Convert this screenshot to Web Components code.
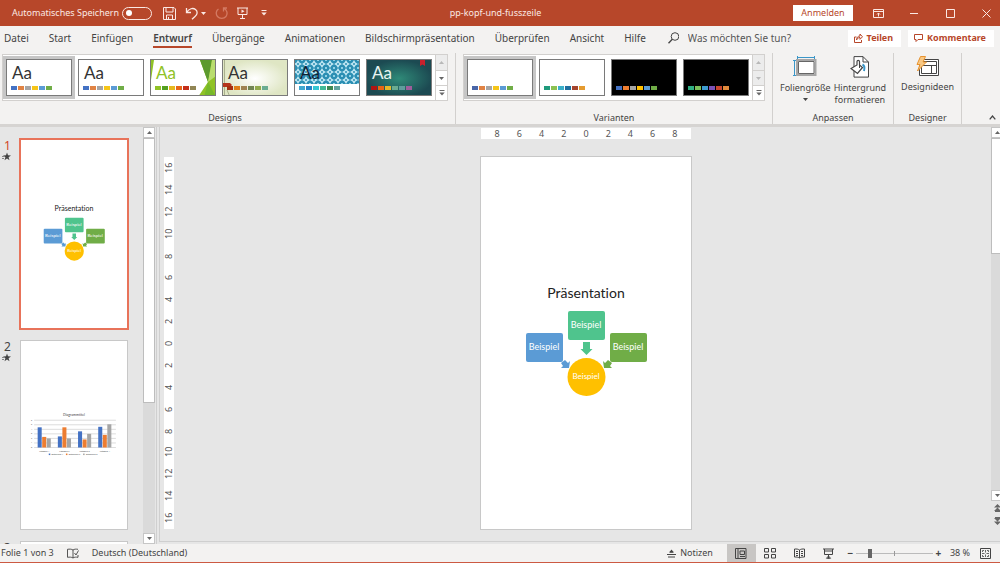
<!DOCTYPE html>
<html lang="de">
<head>
<meta charset="utf-8">
<meta name="viewport" content="width=device-width, initial-scale=1">
<title>pp-kopf-und-fusszeile</title>
<style>
  html, body {
    height: 100%;
    margin: 0;
  }

  body {
    font-family: "Noto Sans", "Open Sans", sans-serif;
    font-size: 9px;
    line-height: 12px;
    color: #444;
    overflow: hidden;
  }
</style>
</head>
<body>
<app-window></app-window>

<script>
const baseStyle = `
  * {
    box-sizing: border-box;
  }

  button, input, h1, ol {
    padding: 0;
    margin: 0;
  }

  button, input {
    font: inherit;
    color: inherit;
    background: none;
    border: 0;
    outline: 0;
  }

  button {
    display: flex;
    align-items: center;
    justify-content: center;
    white-space: nowrap;
  }
`;

// name: [width, height, markup]
const icons = {
  save: [13, 13, '<path d="M.5 .5h10.500l1.500 1.500v10.500H.5zM3 .5v4.500h7V.5M3.500 12.500V8h6v4.500M5.500 12.500V10"/>'],
  undo: [14, 13, '<path stroke-width="1.300" d="M1.500 1v4.500H6M1.500 5.500C4 1.500 8 .5 10.500 2.500c2.500 2 2 5-.5 7L7 12.300"/>'],
  redo: [13, 13, '<path stroke-width="1.300" d="M8.500 4.500V1H12M9 1.500c3 1.500 4 5 2 8-2 2.500-6.500 2.500-8.500 0C.5 7 1 3.500 3.500 2"/>'],
  present: [11, 12, '<path d="M0 1h11M1 1v6.500h9V1M5.500 7.500v4M3 11.500h5"/><path fill="currentColor" stroke="none" d="M4.500 2.500l3 1.800-3 1.800z"/>'],
  more: [6, 6, '<path d="M.5 .5h5"/><path fill="currentColor" stroke="none" d="M.3 2.500h5.400L3 5.500z"/>'],
  caret: [5, 3, '<path fill="currentColor" stroke="none" d="M0 0h5L2.500 3z"/>'],
  caretUp: [5, 3, '<path fill="currentColor" stroke="none" d="M0 3h5L2.500 0z"/>'],
  ribbonMode: [11, 9, '<path d="M.5 .5h10v8H.5zM.5 2.500h10M5.500 7.500V4M4 5.500L5.500 4 7 5.500"/>'],
  minimize: [9, 9, '<path d="M0 4.500h8"/>'],
  maximize: [9, 9, '<path d="M.5 .5h8v8h-8z"/>'],
  close: [9, 9, '<path d="M.5 .5l8 8M8.500 .5l-8 8"/>'],
  search: [11, 12, '<circle cx="7" cy="4.500" r="3.800"/><path stroke-width="1.300" d="M4.300 7.200L.5 11.300"/>'],
  share: [9, 10, '<path d="M2.500 4H.5v5.500h7V7M2.500 7C2.500 4.500 4 3 6 3V1l2.500 2.800L6 6.300V4.500C4.500 4.500 3.200 5.500 2.500 7z"/>'],
  comment: [9, 8, '<path d="M.5 .5h8v5H4l-2 2v-2H.5z"/>'],
  slideSize: [24, 22, '<path stroke="#3a96c8" d="M4 1.500h18M4.500 0v3M21.500 0v3M1.500 4v16M0 4.500h3M0 19.500h3"/><path fill="#fff" stroke="#a6a6a6" stroke-width="2" d="M4 4h18.500v15H4z"/><path stroke="#666" d="M5.500 5.500h15.500v12H5.500z"/>'],
  background: [20, 22, '<path fill="#fff" d="M4 .6h9l5.500 5.500v15H4z"/><path d="M13 .6V6h5.500"/><path stroke="#3a96c8" stroke-width="2" d="M12.500 8.500c2 1 2.300 3.500 1.500 6.500"/><path fill="#fff" stroke-width="1.200" d="M7 9V5.500c0-1.500 2.500-1.500 2.500 0V9l3 2.500-5 6L1 12.500 7 9z"/><path d="M9.500 9v3"/>'],
  ideas: [24, 21, '<path fill="#fff" d="M3.500 3.500h19v16h-19z"/><path d="M5.500 5.500h15v12h-15zM5.500 9.500h15M15.500 9.500v8"/><path fill="#f8c884" stroke="#e8932e" d="M4.500.5h5L7 6h3.500L1.500 15 4 8.500H1z"/>'],
  chevronUp: [7, 5, '<path stroke-width="1.300" d="M.7 4.300L3.500 1l2.800 3.300"/>'],
  star: [9, 9, '<path fill="currentColor" stroke="none" d="M5 .5l1 2.800 3 .1-2.400 1.800.9 3L5 6.500 2.500 8.200l.9-3L1 3.400l3-.1z"/><path stroke-width=".6" d="M0 4.500h2M0 6.500h2"/>'],
  spelling: [12, 11, '<path stroke-width=".9" d="M6 2C4.500 1 2.500 1 .5 1.300v8c2-.3 4-.3 5.500.7 1.500-1 3-1 5-.7V7M6 2v8M6 2c1.500-1 3-1 5-.7M7.500 5l1.500 2L11.500 2.500"/>'],
  notes: [9, 9, '<path d="M0 5.500h9M1 8h7M2.500 3.300h4"/><path fill="currentColor" stroke="none" d="M2.500 3L4.500.5l2 2.500z"/>'],
  normal: [12, 11, '<path d="M.5 .5h10.500v10H.5zM3 .5v10M5 3h4.500v3.500H5zM5 8.500h5"/>'],
  sorter: [12, 11, '<path d="M.5 .5h4v3.500h-4zM7.500 .5h4v3.500h-4zM.5 6.500h4V10h-4zM7.500 6.500h4V10h-4z"/>'],
  reading: [11, 11, '<path d="M5.500 2C4 .9 2.500 1 .5 1v8c2 0 3.500 0 5 1 1.500-1 3-1 5-1V1c-2 0-3.500-.1-5 1zM5.500 2v8M2 3.500h2M2 5.500h2M2 7.500h2M7 3.500h2M7 5.500h2M7 7.500h2"/>'],
  show: [11, 11, '<path d="M0 1h11M1.500 1v5.500h8V1M2 3h7M5.500 6.500v4M3.500 10.300L5.500 8l2 2.300z"/>'],
  fit: [11, 11, '<path d="M.5 .5h10v10H.5z"/><path stroke-width=".8" d="M5.500 2v2.500M5.500 6.500V9M2 5.500h2.500M6.500 5.500H9M2.500 4V2.500H4M7 2.500h1.500V4M2.500 7v1.500H4M7 8.500h1.500V7"/>'],
  prevSlide: [7, 8, '<path fill="currentColor" stroke="none" d="M3.500 0L7 3.500H0zM3.500 3.500L7 7H0z"/><path d="M1 7.500h5"/>'],
  nextSlide: [7, 8, '<path fill="currentColor" stroke="none" d="M3.500 8L7 4.500H0zM3.500 4.500L7 1H0z"/><path d="M1 .5h5"/>'],
};

class UiIcon extends HTMLElement {
  constructor() {
    super();
    this._shadowRoot = this.attachShadow({ mode: 'open' });
  }

  connectedCallback() {
    const [width, height, markup] = icons[this.getAttribute('name')];
    this._shadowRoot.innerHTML = `<style>
        :host { display: inline-flex; flex: none; }
        svg { display: block; fill: none; stroke: currentColor; }
      </style>
      <svg width="${width}" height="${height}" viewBox="0 0 ${width} ${height}" aria-hidden="true">${markup}</svg>`;
  }
}

class TitleBar extends HTMLElement {
  constructor() {
    super();
    this._shadowRoot = this.attachShadow({ mode: 'open' });
  }

  connectedCallback() {
    this._shadowRoot.innerHTML = `<style>
        ${baseStyle}
        :host {
          display: grid;
          grid-template-columns: 1fr auto 1fr;
          align-items: center;
          padding-right: 9px;
          background: #b7472a;
          color: #fbe9e4;
        }
        .left, .right, .autosave { display: flex; align-items: center; }
        .left { padding-left: 12px; gap: 9px; }
        .right { justify-content: flex-end; gap: 26px; }
        .right button { width: 10px; height: 16px; }
        .autosave { gap: 3px; margin-right: 2px; white-space: nowrap; }
        .autosave input {
          appearance: none;
          display: flex;
          align-items: center;
          width: 30px;
          height: 13px;
          padding-left: 3px;
          border: 1px solid #fbe9e4;
          border-radius: 7px;
        }
        .autosave input::before {
          content: "";
          width: 6px;
          height: 6px;
          border-radius: 50%;
          background: #fff;
        }
        .undo { gap: 2px; }
        .redo { color: #d47a63; }
        .more { margin-left: 4px; }
        h1 { font-size: 9px; font-weight: 400; }
        .right .signin {
          width: 60px;
          background: #fff;
          color: #b7472a;
          margin-right: -6px;
        }
      </style>
      <div class="left">
        <label class="autosave">Automatisches Speichern <input type="checkbox" role="switch"></label>
        <button aria-label="Speichern"><ui-icon name="save"></ui-icon></button>
        <button class="undo" aria-label="Rückgängig"><ui-icon name="undo"></ui-icon><ui-icon name="caret"></ui-icon></button>
        <button class="redo" aria-label="Wiederholen"><ui-icon name="redo"></ui-icon></button>
        <button aria-label="Von Anfang an"><ui-icon name="present"></ui-icon></button>
        <button class="more" aria-label="Anpassen"><ui-icon name="more"></ui-icon></button>
      </div>
      <h1>pp-kopf-und-fusszeile</h1>
      <div class="right">
        <button class="signin">Anmelden</button>
        <button aria-label="Menüband-Anzeigeoptionen"><ui-icon name="ribbonMode"></ui-icon></button>
        <button aria-label="Minimieren"><ui-icon name="minimize"></ui-icon></button>
        <button aria-label="Maximieren"><ui-icon name="maximize"></ui-icon></button>
        <button aria-label="Schließen"><ui-icon name="close"></ui-icon></button>
      </div>`;
  }
}

class RibbonTabs extends HTMLElement {
  constructor() {
    super();
    this._shadowRoot = this.attachShadow({ mode: 'open' });
  }

  connectedCallback() {
    const tabs = ['Datei', 'Start', 'Einfügen', 'Entwurf', 'Übergänge', 'Animationen',
      'Bildschirmpräsentation', 'Überprüfen', 'Ansicht', 'Hilfe'];
    this._shadowRoot.innerHTML = `<style>
        ${baseStyle}
        :host {
          display: flex;
          align-items: center;
          justify-content: space-between;
          padding: 0 6px 0 4px;
          background: #f3f2f1;
          font-size: 10px;
        }
        nav, .actions, .search { display: flex; align-items: center; }
        nav { gap: 20px; }
        nav button { height: 20px; border: solid transparent; border-width: 2px 0; }
        nav .active { font-weight: 600; border-bottom-color: #b7472a; }
        .search { gap: 9px; margin-left: 2px; }
        .search input { width: 120px; }
        .search input::placeholder { color: #555; opacity: 1; }
        .actions { gap: 7px; }
        .actions button {
          gap: 4px;
          height: 17px;
          padding: 0 8px 0 6px;
          background: #fff;
          color: #b7472a;
          font-size: 9px;
          font-weight: 700;
        }
      </style>
      <nav>
        ${tabs.map((tab) => `<button class="${tab === 'Entwurf' ? 'active' : ''}">${tab}</button>`).join('')}
        <label class="search"><ui-icon name="search"></ui-icon><input type="text" placeholder="Was möchten Sie tun?" aria-label="Suchen"></label>
      </nav>
      <div class="actions">
        <button><ui-icon name="share"></ui-icon>Teilen</button>
        <button><ui-icon name="comment"></ui-icon>Kommentare</button>
      </div>`;
  }
}

const backdrops = {
  facet: `<path fill="#90c226" d="M0 0h4L1 20v17H0zM50 0h16v37H48l10-15z"/>
    <path fill="#5c9a2e" d="M50 0h12l-4 22z"/><path fill="#b9dd6e" d="M62 0h4v16L58 22z"/>
    <path fill="#76b82a" d="M58 22l8 15H54z"/>`,
  wisp: `<defs><radialGradient id="w"><stop offset="0" stop-color="#fff"/><stop offset="1" stop-color="#dfe6c4"/></radialGradient></defs>
    <path fill="url(#w)" d="M0 0h66v37H0z"/><path stroke="#a9b08c" d="M2.500 0v37M5 30l3 7"/>
    <path fill="#b5341c" d="M0 23h8l2 2-2 2H0z"/>`,
  integral: `<defs><pattern id="p" width="8" height="8" patternUnits="userSpaceOnUse">
      <path fill="#2b8fb3" d="M0 0h8v8H0z"/><path fill="#bfe6f2" d="M4 0l1.500 2.500L8 4 5.500 5.500 4 8 2.500 5.500 0 4l2.500-1.500z"/>
      <circle cx="4" cy="4" r="1" fill="#2b8fb3"/><path fill="#8fd0e4" d="M0 0h1v1H0zM7 0h1v1H7zM0 7h1v1H0zM7 7h1v1H7z"/></pattern></defs>
    <path fill="url(#p)" d="M0 0h66v24H0z"/>`,
  ion: `<defs><radialGradient id="i"><stop offset="0" stop-color="#2f8a78"/><stop offset="1" stop-color="#1c4a52"/></radialGradient></defs>
    <path fill="url(#i)" d="M0 0h66v37H0z"/><path fill="#c8202c" d="M54 0h5v6l-2.500-1.500L54 6z"/>`,
};

class DesignThumb extends HTMLElement {
  constructor() {
    super();
    this._shadowRoot = this.attachShadow({ mode: 'open' });
  }

  connectedCallback() {
    const colors = this.getAttribute('colors').split(' ');
    const backdrop = backdrops[this.getAttribute('backdrop')] || '';
    this._shadowRoot.innerHTML = `<style>
        ${baseStyle}
        :host { display: flex; align-items: center; justify-content: center; width: 72px; height: 43px; }
        :host([selected]) { background: #c6c6c6; }
        button {
          display: grid;
          grid-template-rows: 1fr 9px;
          width: 66px;
          height: 37px;
          border: 1px solid #7a7a7a;
          background: var(--paper, #fff);
          overflow: hidden;
        }
        svg, .content { grid-area: 1 / 1 / 3 / 2; }
        svg { display: block; width: 66px; height: 37px; fill: none; }
        .content {
          display: flex;
          flex-direction: column;
          justify-content: flex-end;
          width: 66px;
          padding: 0 0 4px 5px;
          text-align: left;
          font: 17px/20px Lato, sans-serif;
          color: var(--ink, #333);
        }
        .content slot { display: block; height: 23px; padding-left: 1px; }
        .swatches { display: flex; gap: 1px; }
        i { width: 6px; height: 4px; }
      </style>
      <button aria-label="Design">
        <svg viewBox="0 0 66 37" aria-hidden="true">${backdrop}</svg>
        <span class="content">
          <slot></slot>
          <span class="swatches">${colors.map((color) => `<i style="background: ${color}"></i>`).join('')}</span>
        </span>
      </button>`;
  }
}

class DesignGallery extends HTMLElement {
  constructor() {
    super();
    this._shadowRoot = this.attachShadow({ mode: 'open' });
  }

  connectedCallback() {
    this._shadowRoot.innerHTML = `<style>
        ${baseStyle}
        :host { display: flex; height: 47px; border: 1px solid #d2d0ce; background: #fff; }
        .thumbs { display: flex; align-items: center; }
        .scroll { display: grid; grid-template-rows: repeat(3, 1fr); width: 12px; border-left: 1px solid #d2d0ce; color: #666; }
        .scroll button + button { border-top: 1px solid #d2d0ce; }
        .scroll :disabled { background: #ececec; color: #b8b8b8; }
      </style>
      <div class="thumbs"><slot></slot></div>
      <div class="scroll">
        <button disabled aria-label="Nach oben"><ui-icon name="caretUp"></ui-icon></button>
        <button ${this.hasAttribute('end') ? 'disabled' : ''} aria-label="Nach unten"><ui-icon name="caret"></ui-icon></button>
        <button aria-label="Weitere"><ui-icon name="more"></ui-icon></button>
      </div>`;
  }
}

class RibbonGroup extends HTMLElement {
  constructor() {
    super();
    this._shadowRoot = this.attachShadow({ mode: 'open' });
  }

  connectedCallback() {
    this._shadowRoot.innerHTML = `<style>
        ${baseStyle}
        :host {
          display: flex;
          flex-direction: column;
          justify-content: space-between;
          align-items: center;
          height: 71px;
          padding: 1px 7px 0;
          border-right: 1px solid #d2d0ce;
        }
        .body { display: flex; gap: 3px; }
      </style>
      <div class="body"><slot></slot></div>
      <span>${this.getAttribute('label')}</span>`;
  }
}

class RibbonButton extends HTMLElement {
  constructor() {
    super();
    this._shadowRoot = this.attachShadow({ mode: 'open' });
  }

  connectedCallback() {
    this._shadowRoot.innerHTML = `<style>
        ${baseStyle}
        :host { display: block; }
        button { flex-direction: column; justify-content: flex-start; gap: 4px; padding-top: 2px; }
        .text { display: flex; flex-direction: column; align-items: center; }
        .text ui-icon { margin-top: 4px; }
      </style>
      <button>
        <ui-icon name="${this.getAttribute('icon')}"></ui-icon>
        <span class="text"><slot></slot>${this.hasAttribute('menu') ? '<ui-icon name="caret"></ui-icon>' : ''}</span>
      </button>`;
  }
}

class RibbonBar extends HTMLElement {
  constructor() {
    super();
    this._shadowRoot = this.attachShadow({ mode: 'open' });
  }

  connectedCallback() {
    const office = '#4472c4 #e08344 #a5a5a5 #f5c518 #5b9bd5 #70ad47';
    this._shadowRoot.innerHTML = `<style>
        ${baseStyle}
        :host {
          display: flex;
          align-items: flex-start;
          padding-top: 3px;
          border-bottom: 3px solid #d6d4d2;
          background: #f3f2f1;
        }
        .first { padding-left: 2px; }
        .dark { --paper: #000; }
        .ion { --ink: #e8f4f2; }
        .facet { --ink: #90c226; }
        .integral { --ink: #123; }
        .collapse { align-self: flex-end; margin: 0 4px 4px auto; }
      </style>
      <ribbon-group class="first" label="Designs">
        <design-gallery>
          <design-thumb selected colors="${office}">Aa</design-thumb>
          <design-thumb colors="${office}">Aa</design-thumb>
          <design-thumb class="facet" backdrop="facet" colors="#90c226 #54a021 #e6b91e #e76618 #c42f1a #918655">Aa</design-thumb>
          <design-thumb backdrop="wisp" colors="#a53010 #de7e18 #9f8351 #728653 #92aa4c #6aac91">Aa</design-thumb>
          <design-thumb class="integral" backdrop="integral" colors="#40a8d0 #2683c6 #36c6d3 #42ba97 #3e8853 #62a39f">Aa</design-thumb>
          <design-thumb class="ion" backdrop="ion" colors="#b01513 #ea6312 #e6b729 #6aac90 #5f9c9d #9e5e9b">Aa</design-thumb>
        </design-gallery>
      </ribbon-group>
      <ribbon-group label="Varianten">
        <design-gallery end>
          <design-thumb selected colors="#4a66a8 #e08344 #a5a5a5 #f5c518 #5b9bd5 #70ad47"></design-thumb>
          <design-thumb colors="#1f9a7c #8cc152 #3bb0c9 #1f6f9f #a5452e #e59b30"></design-thumb>
          <design-thumb class="dark" colors="#4472c4 #ed7d31 #a5a5a5 #ffc000 #5b9bd5 #70ad47"></design-thumb>
          <design-thumb class="dark" colors="#2fae82 #7bbf5a #3d9bd0 #7a52b8 #c8452e #e08a3c"></design-thumb>
        </design-gallery>
      </ribbon-group>
      <ribbon-group label="Anpassen">
        <ribbon-button icon="slideSize" menu>Foliengröße</ribbon-button>
        <ribbon-button icon="background">Hintergrund<br>formatieren</ribbon-button>
      </ribbon-group>
      <ribbon-group label="Designer">
        <ribbon-button icon="ideas">Designideen</ribbon-button>
      </ribbon-group>
      <button class="collapse" aria-label="Menüband reduzieren"><ui-icon name="chevronUp"></ui-icon></button>`;
  }
}

// Slide contents share one 210 x 372 canvas, so they scale to any frame.
const slides = {
  cycle: `<g font-family="Lato, sans-serif" text-anchor="middle" fill="#fff" font-size="9">
      <text x="105" y="141" font-size="14" fill="#222">Präsentation</text>
      <rect x="87" y="154" width="37" height="29" rx="2" fill="#4fc48d"/>
      <rect x="45" y="176" width="37" height="29" rx="2" fill="#5b9bd5"/>
      <rect x="129" y="176" width="37" height="29" rx="2" fill="#70ad47"/>
      <circle cx="105.500" cy="220" r="19" fill="#ffc000"/>
      <path fill="#4fc48d" d="M102 185h7v7h2.500l-6 6-6-6h2.500z"/>
      <path fill="#5b9bd5" d="M80 206l4-3 3 3 2-2-1 7-8 0 2-2z"/>
      <path fill="#70ad47" d="M131 206l-4-3-3 3-2-2 1 7 8 0-2-2z"/>
      <text x="105" y="171">Beispiel</text>
      <text x="63" y="193">Beispiel</text>
      <text x="147" y="193">Beispiel</text>
      <text x="105" y="222" font-size="8">Beispiel</text>
    </g>`,
  chart: (() => {
    const base = 211;
    const groups = [[40, 21, 18], [22, 40, 18], [32, 16, 27], [41, 25, 46]];
    const fills = ['#4472c4', '#ed7d31', '#a5a5a5'];
    let markup = '<g font-family="Lato, sans-serif" text-anchor="middle" fill="#444" font-size="4">';
    markup += '<text x="105" y="149" font-size="7">Diagrammtitel</text>';
    for (let i = 0; i < 7; i++) {
      const y = base - i * 9;
      markup += `<path stroke="#bbb" d="M26 ${y}h162"/><text x="21" y="${y + 1}">${i}</text>`;
    }
    groups.forEach((group, g) => {
      group.forEach((height, b) => {
        markup += `<rect x="${33 + g * 40 + b * 9}" y="${base - height}" width="8" height="${height}" fill="${fills[b]}"/>`;
      });
      markup += `<text x="${46 + g * 40}" y="${base + 8}">Kategorie ${g + 1}</text>`;
    });
    fills.forEach((fill, i) => {
      markup += `<rect x="${55 + i * 34}" y="223" width="3" height="3" fill="${fill}"/><text x="${72 + i * 34}" y="226">Datenreihe ${i + 1}</text>`;
    });
    return markup + '</g>';
  })(),
  blank: '',
};

class SlideView extends HTMLElement {
  constructor() {
    super();
    this._shadowRoot = this.attachShadow({ mode: 'open' });
  }

  connectedCallback() {
    this._shadowRoot.innerHTML = `<style>
        :host { display: block; background: #fff; box-shadow: 0 0 0 1px #c8c8c8; }
        svg { display: block; width: 100%; font-variant-ligatures: none; }
      </style>
      <svg viewBox="0 0 210 372">${slides[this.getAttribute('content')]}</svg>`;
  }
}

class ScrollBar extends HTMLElement {
  constructor() {
    super();
    this._shadowRoot = this.attachShadow({ mode: 'open' });
  }

  connectedCallback() {
    this._shadowRoot.innerHTML = `<style>
        ${baseStyle}
        :host { display: flex; flex-direction: column; width: 12px; color: #666; }
        button { flex: none; height: 11px; border: 1px solid #c6c6c6; background: #fff; }
        .track { flex: 1; background: #dadada; }
        .thumb { height: ${this.getAttribute('size')}; border: 1px solid #bdbdbd; background: #fff; }
      </style>
      <button aria-label="Nach oben"><ui-icon name="caretUp"></ui-icon></button>
      <div class="track"><div class="thumb"></div></div>
      <button aria-label="Nach unten"><ui-icon name="caret"></ui-icon></button>
      <slot></slot>`;
  }
}

class SlideList extends HTMLElement {
  constructor() {
    super();
    this._shadowRoot = this.attachShadow({ mode: 'open' });
  }

  connectedCallback() {
    const contents = ['cycle', 'chart', 'blank'];
    this._shadowRoot.innerHTML = `<style>
        ${baseStyle}
        :host { display: flex; justify-content: space-between; width: 156px; border-right: 1px solid #cfcfcf; overflow: hidden; }
        ol { display: flex; flex-direction: column; gap: 13px; padding: 13px 0 0 4px; list-style: none; }
        li { display: grid; grid-template-columns: 17px 106px; }
        .number { display: flex; flex-direction: column; gap: 1px; font-size: 12px; line-height: 11px; }
        .number ui-icon { margin-left: -2px; }
        .current b { color: #d24726; }
        b { font-weight: 400; }
        .current slide-view { box-shadow: 0 0 0 2px #e8735a; }
        scroll-bar { margin-right: 1px; }
      </style>
      <ol>
        ${contents.map((content, i) => `<li class="${i === 0 ? 'current' : ''}">
          <div class="number"><b>${i + 1}</b><ui-icon name="star"></ui-icon></div>
          <slide-view content="${content}"></slide-view>
        </li>`).join('')}
      </ol>
      <scroll-bar size="67%"></scroll-bar>`;
  }
}

class SlideRuler extends HTMLElement {
  constructor() {
    super();
    this._shadowRoot = this.attachShadow({ mode: 'open' });
  }

  connectedCallback() {
    const max = Number(this.getAttribute('max'));
    const marks = [];
    for (let n = -max; n <= max; n += 2) {
      marks.push(Math.abs(n));
    }
    this._shadowRoot.innerHTML = `<style>
        :host { display: flex; background: #fff; color: #555; }
        :host([vertical]) { flex-direction: column; }
        span { flex: 1; display: flex; align-items: center; justify-content: center; line-height: 10px; }
        :host([vertical]) span { writing-mode: vertical-rl; transform: rotate(180deg); }
      </style>
      ${marks.map((mark) => `<span>${mark}</span>`).join('')}`;
  }
}

class SlideEditor extends HTMLElement {
  constructor() {
    super();
    this._shadowRoot = this.attachShadow({ mode: 'open' });
  }

  connectedCallback() {
    this._shadowRoot.innerHTML = `<style>
        ${baseStyle}
        :host {
          --slide-height: calc(100vh - 191px);
          --slide-width: calc(var(--slide-height) * 210 / 372);
          display: flex;
          min-width: 0;
          margin: 0 0 2px 2px;
          border: solid #cfcfcf;
          border-width: 0 0 1px 1px;
          overflow: hidden;
        }
        .canvas {
          flex: 1;
          display: grid;
          grid-template-columns: 10px 1fr;
          grid-template-rows: 11px auto;
          gap: 18px 7px;
          justify-items: center;
          align-content: start;
          padding: 1px 0 0 4px;
        }
        .top { grid-column: 2; width: var(--slide-width); padding: 0 5px; }
        .side { height: var(--slide-height); width: 10px; }
        slide-view { width: var(--slide-width); }
        scroll-bar { margin-right: -3px; padding-bottom: 14px; }
        .jump { height: 13px; color: #666; }
      </style>
      <div class="canvas">
        <slide-ruler class="top" max="8"></slide-ruler>
        <slide-ruler class="side" max="16" vertical></slide-ruler>
        <slide-view content="cycle"></slide-view>
      </div>
      <scroll-bar size="33%">
        <button class="jump" aria-label="Vorherige Folie"><ui-icon name="prevSlide"></ui-icon></button>
        <button class="jump" aria-label="Nächste Folie"><ui-icon name="nextSlide"></ui-icon></button>
      </scroll-bar>`;
  }
}

class StatusBar extends HTMLElement {
  constructor() {
    super();
    this._shadowRoot = this.attachShadow({ mode: 'open' });
  }

  connectedCallback() {
    this._shadowRoot.innerHTML = `<style>
        ${baseStyle}
        :host {
          display: flex;
          justify-content: space-between;
          padding: 0 9px 0 1px;
          border-bottom: 1px solid #cc5a42;
          background: #f3f2f1;
        }
        .left, .right, .zoom { display: flex; align-items: center; }
        .left { gap: 13px; }
        .notes { gap: 4px; margin-right: 14px; }
        .view { width: 29px; height: 18px; }
        .view.active { background: #c8c6c4; }
        .zoom { gap: 2px; margin-left: 4px; }
        .zoom button { width: 7px; font-weight: 700; font-size: 10px; }
        output { margin: 0 10px 0 8px; white-space: nowrap; }
        input {
          appearance: none;
          width: 77px;
          height: 9px;
          background:
            linear-gradient(#999, #999) center / 1px 5px no-repeat,
            linear-gradient(#bbb, #bbb) center / 100% 1px no-repeat;
        }
        input::-webkit-slider-thumb { appearance: none; width: 4px; height: 9px; background: #666; }
      </style>
      <div class="left">
        <span>Folie 1 von 3</span>
        <ui-icon name="spelling"></ui-icon>
        <span>Deutsch (Deutschland)</span>
      </div>
      <div class="right">
        <button class="notes"><ui-icon name="notes"></ui-icon>Notizen</button>
        <button class="view active" aria-label="Normal"><ui-icon name="normal"></ui-icon></button>
        <button class="view" aria-label="Foliensortierung"><ui-icon name="sorter"></ui-icon></button>
        <button class="view" aria-label="Leseansicht"><ui-icon name="reading"></ui-icon></button>
        <button class="view" aria-label="Bildschirmpräsentation"><ui-icon name="show"></ui-icon></button>
        <div class="zoom">
          <button aria-label="Verkleinern">−</button>
          <input type="range" min="0" max="100" value="17" aria-label="Zoom">
          <button aria-label="Vergrößern">+</button>
        </div>
        <output>38 %</output>
        <button aria-label="An Fenster anpassen"><ui-icon name="fit"></ui-icon></button>
      </div>`;
  }
}

class AppWindow extends HTMLElement {
  constructor() {
    super();
    this._shadowRoot = this.attachShadow({ mode: 'open' });
  }

  connectedCallback() {
    this._shadowRoot.innerHTML = `<style>
        :host {
          display: grid;
          grid-template-rows: 26px 24px 77px minmax(0, 1fr) 19px;
          height: 100vh;
          background: #e6e6e6;
        }
        main { display: grid; grid-template-columns: auto minmax(0, 1fr); grid-template-rows: minmax(0, 1fr); min-height: 0; }
      </style>
      <title-bar></title-bar>
      <ribbon-tabs></ribbon-tabs>
      <ribbon-bar></ribbon-bar>
      <main>
        <slide-list></slide-list>
        <slide-editor></slide-editor>
      </main>
      <status-bar></status-bar>`;
  }
}

customElements.define('ui-icon', UiIcon);
customElements.define('title-bar', TitleBar);
customElements.define('ribbon-tabs', RibbonTabs);
customElements.define('design-thumb', DesignThumb);
customElements.define('design-gallery', DesignGallery);
customElements.define('ribbon-group', RibbonGroup);
customElements.define('ribbon-button', RibbonButton);
customElements.define('ribbon-bar', RibbonBar);
customElements.define('slide-view', SlideView);
customElements.define('scroll-bar', ScrollBar);
customElements.define('slide-list', SlideList);
customElements.define('slide-ruler', SlideRuler);
customElements.define('slide-editor', SlideEditor);
customElements.define('status-bar', StatusBar);
customElements.define('app-window', AppWindow);
</script>
</body>
</html>
